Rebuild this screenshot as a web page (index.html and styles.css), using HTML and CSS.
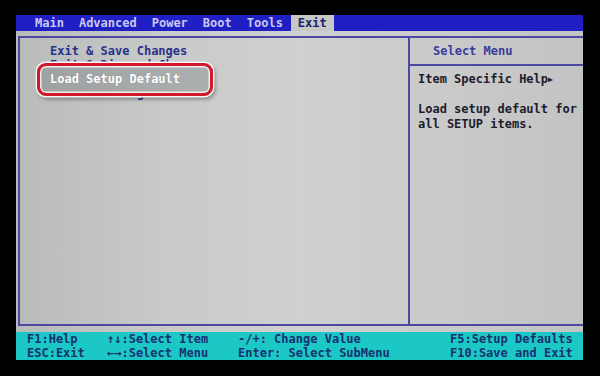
FILE: index.html
```html
<!DOCTYPE html>
<html lang="en">
<head>
    <meta charset="UTF-8">
    <meta name="viewport" content="width=device-width, initial-scale=1.0">
    <title>BIOS Setup Utility - Exit</title>
    <link rel="stylesheet" href="styles.css">
</head>
<body>
    <div class="screen">
        <div class="menubar">
            <span class="tab">Main</span>
            <span class="tab">Advanced</span>
            <span class="tab">Power</span>
            <span class="tab">Boot</span>
            <span class="tab">Tools</span>
            <span class="tab active">Exit</span>
        </div>

        <div class="frame">
            <div class="options">
                <div class="option">Exit &amp; Save Changes</div>
                <div class="option">Exit &amp; Discard Changes</div>
                <div class="option selected">Load Setup Default</div>
                <div class="option">Discard Changes</div>
            </div>

            <div class="help">
                <div class="help-title">Select Menu</div>
                <div class="help-body">
                    <div class="help-head">Item Specific Help<span class="arrow">&#9654;</span></div>
                    <p>Load setup default for<br>all SETUP items.</p>
                </div>
            </div>
        </div>

        <div class="keys">
            <span>F1:Help</span>
            <span>&uarr;&darr;:Select Item</span>
            <span>-/+: Change Value</span>
            <span>F5:Setup Defaults</span>
            <span>ESC:Exit</span>
            <span>&larr;&rarr;:Select Menu</span>
            <span>Enter: Select SubMenu</span>
            <span>F10:Save and Exit</span>
        </div>
    </div>
</body>
</html>
```

FILE: styles.css
```css
body {
    margin: 0;
    background: #000;
    font-family: "DejaVu Sans Mono", "Liberation Mono", monospace;
    font-weight: bold;
    font-size: 12px;
}

.screen {
    width: 567px;
    height: 345px;
    margin: 15px 0 0 16px;
    display: flex;
    flex-direction: column;
    background: linear-gradient(90deg, #b9bbbb 0%, #c8c9c9 25%, #d0d0d1 50%, #c9c9c9 80%, #c2c3c3 100%);
}

.menubar {
    height: 16px;
    line-height: 17px;
    padding-left: 12px;
    display: flex;
    background: #1f1fc4;
}

.tab {
    padding: 0 7px;
    margin-right: 1px;
    color: #c9c9f0;
}

.tab.active {
    background: #c6c8c6;
    color: #1e226c;
}

.frame {
    flex: 1;
    margin: 5px 0 0 2px;
    border-top: 2px solid #4a4aa2;
    border-left: 2px solid #4a4aa2;
    border-bottom: 2px solid #4a4aa2;
    display: flex;
}

.options {
    width: 390px;
    padding: 6px 0 0 30px;
    box-sizing: border-box;
    border-right: 2px solid #4a4aa2;
}

.option {
    height: 14px;
    line-height: 14px;
    color: #2a318a;
}

.option.selected {
    position: relative;
    z-index: 1;
    color: #fff;
    text-shadow: 0 0 1px #888;
}

.option.selected::before {
    content: "";
    position: absolute;
    z-index: -1;
    left: -13px;
    top: -9px;
    width: 176px;
    height: 33px;
    box-sizing: border-box;
    border: 3px solid #d2192a;
    border-radius: 9px;
    background: linear-gradient(90deg, #9ea2a2, #acafaf);
    box-shadow: 0 0 0 1.5px #f4f4f4, inset 0 0 0 1.5px #eeeeee, 2px 3px 4px rgba(0, 0, 0, 0.4);
}

.help {
    flex: 1;
}

.help-title {
    height: 26px;
    line-height: 26px;
    padding-left: 23px;
    color: #383c9c;
    border-bottom: 2px solid #4a4aa2;
}

.help-body {
    padding: 6px 0 0 8px;
    line-height: 15px;
    color: #1c1c2c;
}

.help-head .arrow {
    font-size: 8px;
    vertical-align: 1px;
}

.help-body p {
    margin: 15px 0 0;
}

.keys {
    height: 28px;
    margin-top: 6px;
    padding-left: 11px;
    display: grid;
    grid-template-columns: 80px 131px 212px auto;
    line-height: 14px;
    background: #1cc8c6;
    color: #163070;
    white-space: pre;
}
```
